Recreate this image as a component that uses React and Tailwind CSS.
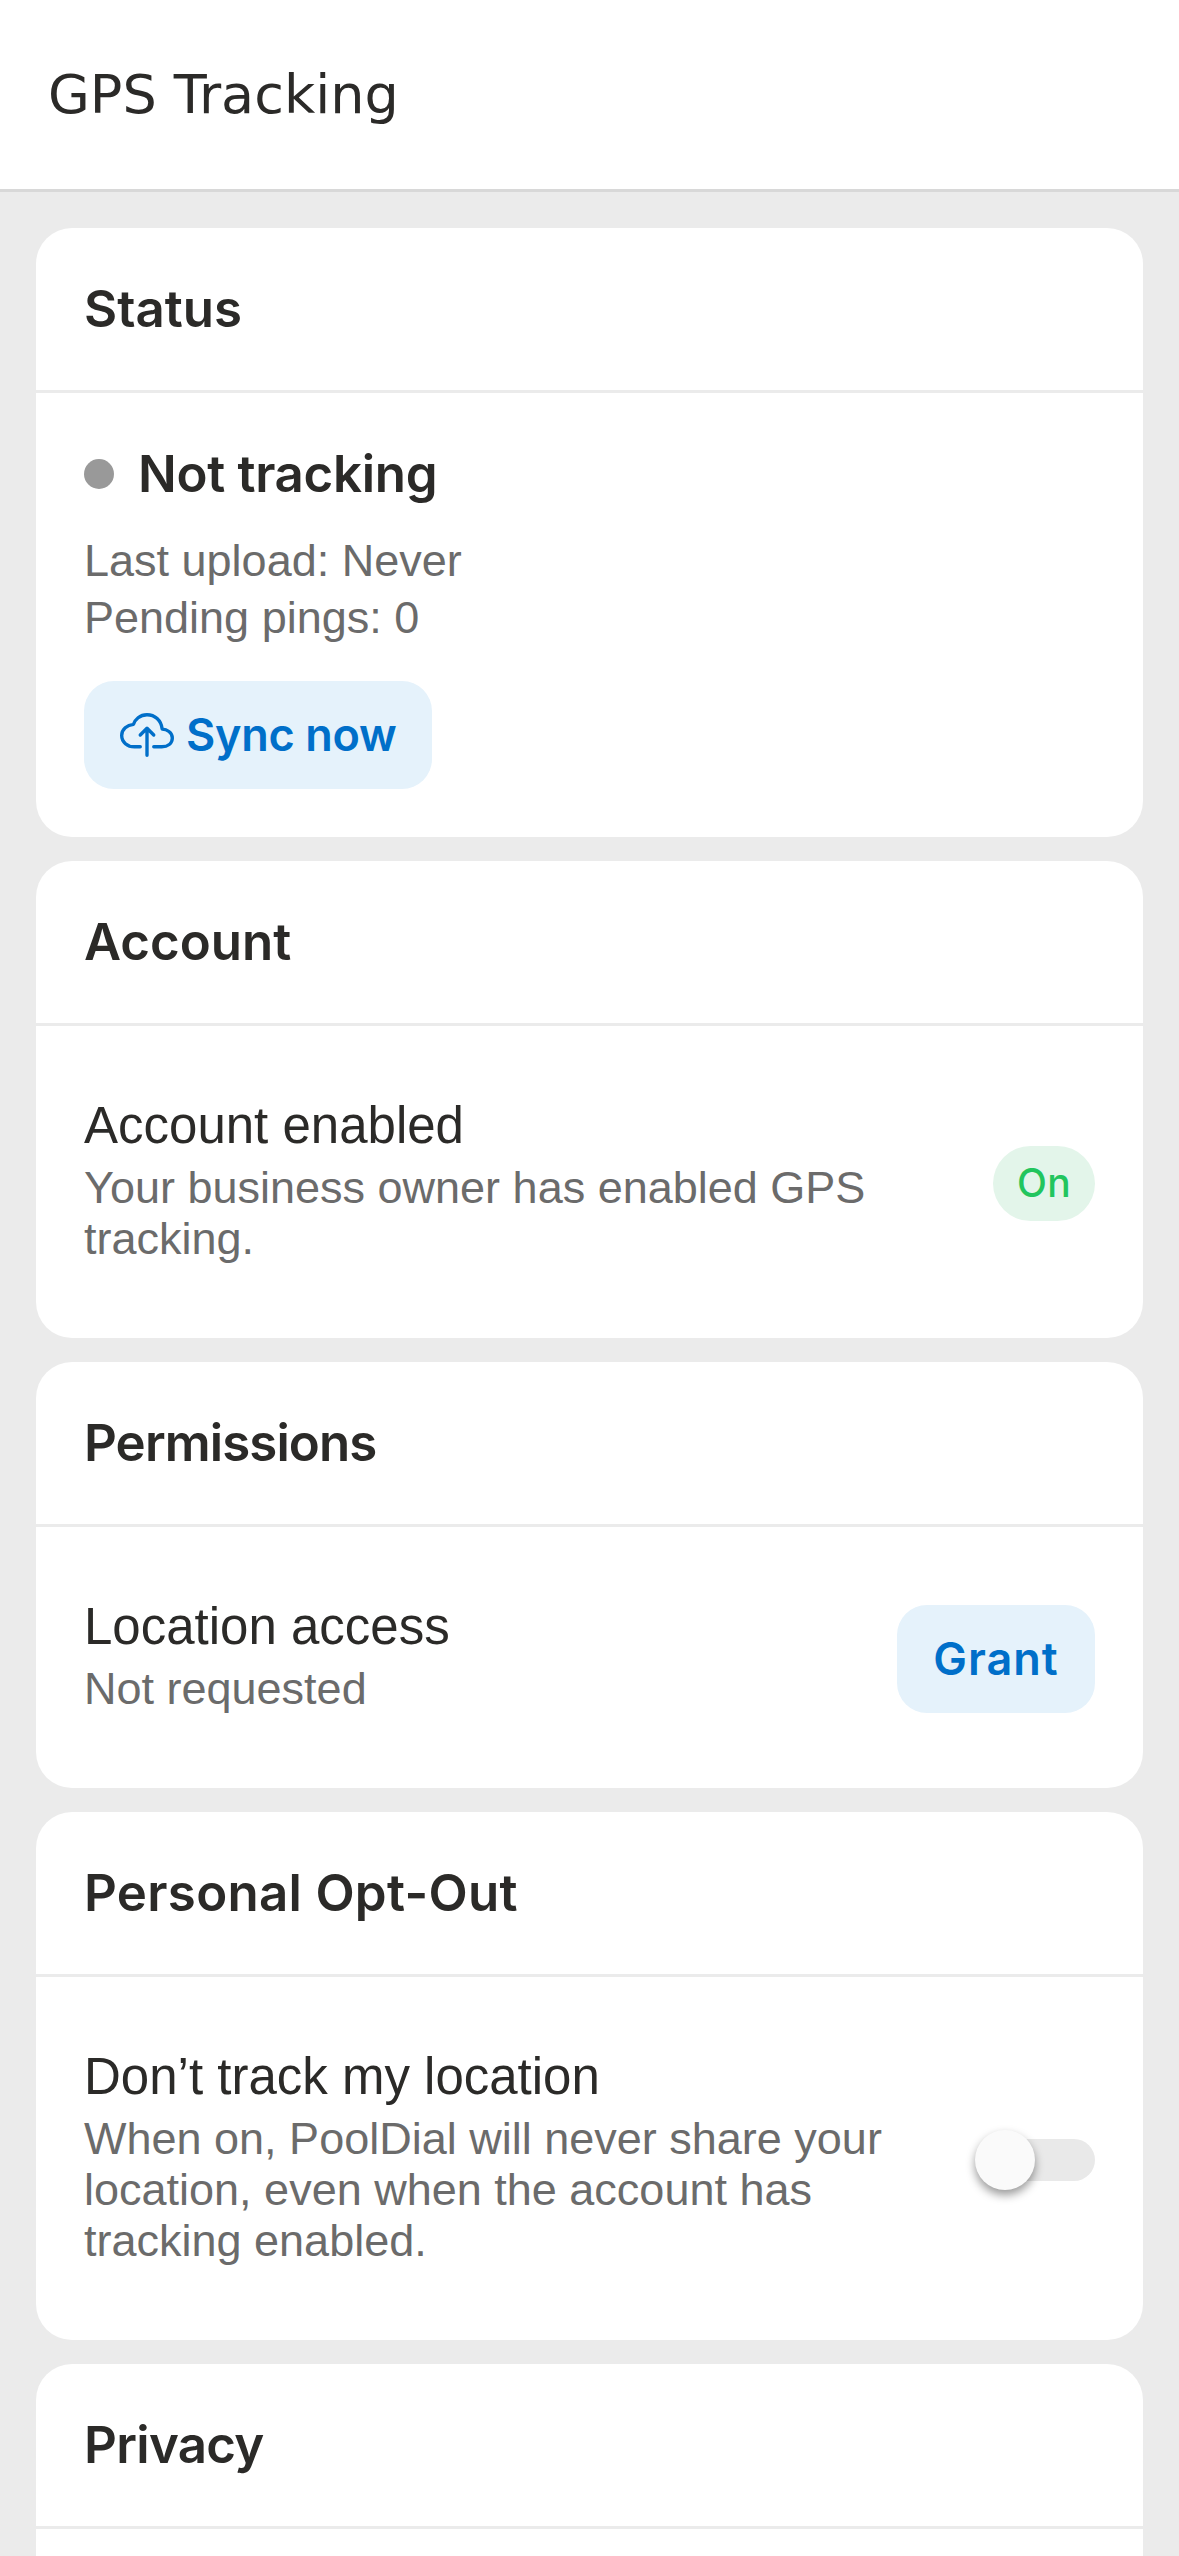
import React from "react";
import { IoCloudUploadOutline } from "react-icons/io5";

const H = "font-['Inter',sans-serif]";
const B = "font-['Liberation_Sans',Arial,sans-serif]";

function Card({ title, tracking = "", children }) {
  return (
    <section className="bg-white rounded-[36px] overflow-hidden shrink-0">
      <div className="h-[165px] px-12 flex items-center border-b-[3px] border-[#ebebeb]">
        <h2 className={`${H} text-[51px] font-semibold text-[#2b2a28] ${tracking}`}>{title}</h2>
      </div>
      {children}
    </section>
  );
}

function Row({ title, desc, right }) {
  return (
    <div className="p-12">
      <div className="flex items-center justify-between gap-12 pt-[22px] pb-[23px]">
        <div className={`flex-1 min-w-0 mb-[3px] ${B}`}>
          <div className="text-[51px] leading-[60px] mb-[6px] text-[#2b2a28]">{title}</div>
          <div className="text-[45px] leading-[51px] text-[#6b6b6b]">{desc}</div>
        </div>
        <div className="mt-[3px] shrink-0">{right}</div>
      </div>
    </div>
  );
}

export default function App() {
  return (
    <div className="h-screen overflow-hidden bg-[#ebebeb]">
      <header className="h-[192px] bg-white border-b-[3px] border-[#d8d8d8] flex items-center px-12">
        <h1 className="font-['DejaVu_Sans',sans-serif] text-[54px] text-[#2b2a28]">GPS Tracking</h1>
      </header>
      <main className="px-9 pt-9 flex flex-col gap-6">
        <Card title="Status">
          <div className="p-12">
            <div className="h-[66px] flex items-center gap-6">
              <span className="w-[30px] h-[30px] rounded-full bg-[#999999]" />
              <span className={`${H} text-[51px] font-semibold text-[#2b2a28] tracking-[-0.3px]`}>Not tracking</span>
            </div>
            <div className={`${B} text-[45px] leading-[57px] text-[#6b6b6b] mt-[25px]`}>
              <div>Last upload: Never</div>
              <div>Pending pings: 0</div>
            </div>
            <button className="mt-[35px] h-[108px] w-[348px] rounded-[30px] bg-[#e5f2fb] flex items-center pl-9 gap-3 text-[#006fc9]">
              <IoCloudUploadOutline className="w-[54px] h-[54px]" />
              <span className={`${H} text-[45px] font-semibold tracking-[-0.3px]`}>Sync now</span>
            </button>
          </div>
        </Card>
        <Card title="Account">
          <Row
            title="Account enabled"
            desc="Your business owner has enabled GPS tracking."
            right={
              <span className={`${H} w-[102px] h-[75px] rounded-full bg-[#e3f5ea] text-[#22c55e] text-[39px] font-medium tracking-[0.4px] flex items-center justify-center`}>On</span>
            }
          />
        </Card>
        <Card title="Permissions" tracking="tracking-[-0.9px]">
          <Row
            title="Location access"
            desc="Not requested"
            right={
              <button className={`${H} block w-[198px] h-[108px] rounded-[30px] bg-[#e5f2fb] text-[#006fc9] text-[45px] font-semibold tracking-[1px]`}>Grant</button>
            }
          />
        </Card>
        <Card title="Personal Opt-Out" tracking="tracking-[0.3px]">
          <Row
            title="Don’t track my location"
            desc="When on, PoolDial will never share your location, even when the account has tracking enabled."
            right={
              <div className="relative w-[120px] h-[60px] flex items-center justify-end">
                <div className="w-[102px] h-[42px] rounded-full bg-[#e9e9e9]" />
                <div className="absolute left-0 top-0 w-[60px] h-[60px] rounded-full bg-[#fafafa] shadow-[0_5px_10px_rgba(0,0,0,0.4)]" />
              </div>
            }
          />
        </Card>
        <Card title="Privacy" tracking="tracking-[-0.7px]">
          <div className="h-[200px]" />
        </Card>
      </main>
    </div>
  );
}
